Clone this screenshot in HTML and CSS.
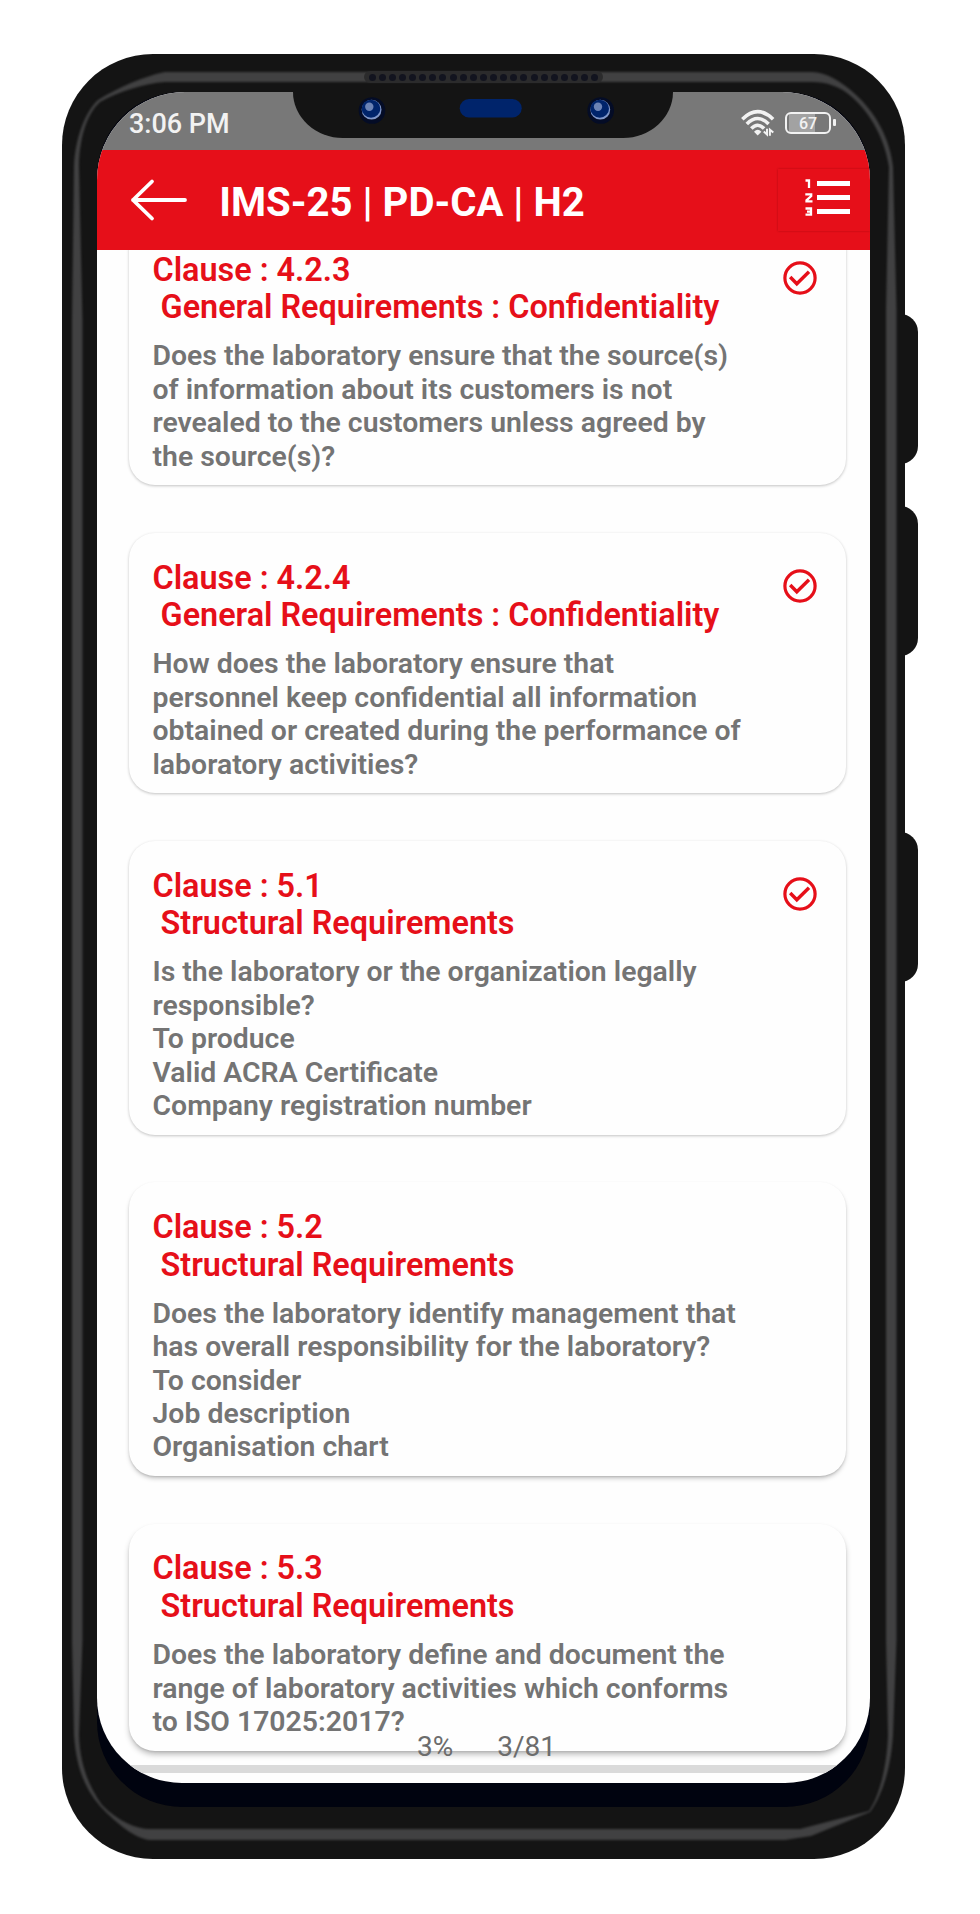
FILE: index.html
```html
<!DOCTYPE html>
<html lang="en">
<head>
<meta charset="utf-8">
<title>IMS-25 | PD-CA | H2</title>
<link rel="stylesheet" href="styles.css">
</head>
<body>
<svg class="defs" width="0" height="0" aria-hidden="true">
  <symbol id="check" viewBox="0 0 34 34">
    <circle cx="17" cy="17" r="15.1" fill="none" stroke="currentColor" stroke-width="3.200"/>
    <path d="M7.2 16 13.8 22.8 26 10.8" fill="none" stroke="currentColor" stroke-width="3.400"/>
  </symbol>
</svg>
<div class="phone">
  <i class="side-key key-up"></i>
  <i class="side-key key-down"></i>
  <i class="side-key key-power"></i>
  <svg class="rim" viewBox="62 54 843 1805" width="843" height="1805" aria-hidden="true">
    <path class="rim-line" fill-rule="evenodd" d="M72 320 74 165C76 132 88 109 98 100 117 88 144 76 165 72H812C826 72 842 82 855 94 875 112 890 138 893 167L896.500 310V1640L893 1735C891 1768 882 1796 870 1812L811 1836 785 1840H150C136 1839 118 1825 100 1806 84 1788 76 1765 74 1735L72 1640ZM82.500 320V1640L79 1735C80 1762 87 1784 102 1805 118 1821 136 1829 150 1829H800L869 1811C880 1795 887 1765 888 1735L886 1640V310L889 167C885 140 872 115 852 97 840 86 826 82 812 82H165C145 83 118 92 100 102 88 113 80 134 79 165Z"/>
  </svg>
  <div class="speaker"><i></i><i></i><i></i><i></i><i></i><i></i><i></i><i></i><i></i><i></i><i></i><i></i><i></i><i></i><i></i><i></i><i></i><i></i><i></i><i></i><i></i><i></i><i></i></div>
  <div class="well">
    <div class="screen">
      <div class="notch">
        <svg width="380" height="46" viewBox="293 92 380 46" aria-hidden="true">
          <g id="lens">
            <circle cx="372" cy="110.500" r="13.300" fill="#040c26"/>
            <circle cx="371.600" cy="109.700" r="9.900" fill="#7f96c8"/>
            <ellipse cx="371" cy="108.700" rx="9.300" ry="9" fill="#00246b"/>
            <circle cx="369.300" cy="106.700" r="4.200" fill="#6c83b5"/>
          </g>
          <use href="#lens" x="228.700"/>
          <rect x="459.700" y="99" width="62" height="18.500" rx="9.200" fill="#00246b"/>
        </svg>
      </div>
      <div class="status">
        <span class="clock">3:06 PM</span>
        <div class="status-icons">
          <svg width="35" height="28" viewBox="741 109 35 28" aria-hidden="true">
            <g fill="none" stroke="#f2f2f2" stroke-width="3.600">
              <path d="M742.300 119.200Q757.700 104.200 773.100 119.200"/>
              <path d="M746.800 123.900Q757.700 113 768.600 123.900"/>
              <path d="M751.300 128.600Q757.700 122 764.100 128.600"/>
            </g>
            <path d="M754 131.700Q757.700 128 761.400 131.700L757.700 135.500Z" fill="#f2f2f2"/>
            <path d="M763.800 131.500 767 134.500V128.700M769.900 135.700V129.700L773.300 132.600" fill="none" stroke="#f2f2f2" stroke-width="2"/>
          </svg>
          <div class="battery"><span>67</span></div>
        </div>
      </div>
      <header class="bar">
        <svg class="back" width="58" height="44" viewBox="130 178 58 44" aria-hidden="true">
          <path d="M185 200H133M152 181.500 133 200 152 218.500" fill="none" stroke="#fff" stroke-width="3.800" stroke-linecap="round" stroke-linejoin="round"/>
        </svg>
        <h1>IMS-25 | PD-CA | H2</h1>
        <div class="list-button">
          <svg width="46" height="40" viewBox="805 178 46 40" aria-hidden="true">
            <path d="M817 181h33v5h-33zM817 195h33v5h-33zM817 209h33v5h-33z" fill="#fff"/>
            <path d="M805.500 180.500H809V188M805.300 194.300H811.200V196L806.500 200.300V201.300H812.500M805.500 208.500H811V214.700H805.500M807 211.600H811" fill="none" stroke="#fff" stroke-width="2.300"/>
          </svg>
        </div>
      </header>
      <main class="list">
        <article class="card">
          <h2>Clause : 4.2.3
 General Requirements : Confidentiality</h2>
          <p>Does the laboratory ensure that the source(s)
of information about its customers is not
revealed to the customers unless agreed by
the source(s)?</p>
          <svg class="check"><use href="#check"/></svg>
        </article>
        <article class="card">
          <h2>Clause : 4.2.4
 General Requirements : Confidentiality</h2>
          <p>How does the laboratory ensure that
personnel keep confidential all information
obtained or created during the performance of
laboratory activities?</p>
          <svg class="check"><use href="#check"/></svg>
        </article>
        <article class="card">
          <h2>Clause : 5.1
 Structural Requirements</h2>
          <p>Is the laboratory or the organization legally
responsible?
To produce
Valid ACRA Certificate
Company registration number</p>
          <svg class="check"><use href="#check"/></svg>
        </article>
        <article class="card lifted">
          <h2>Clause : 5.2
 Structural Requirements</h2>
          <p>Does the laboratory identify management that
has overall responsibility for the laboratory?
To consider
Job description
Organisation chart</p>
        </article>
        <article class="card raised">
          <h2>Clause : 5.3
 Structural Requirements</h2>
          <p>Does the laboratory define and document the
range of laboratory activities which conforms
to ISO 17025:2017?</p>
        </article>
      </main>
      <footer class="progress">
        <div class="counts"><span>3%</span><span>3/81</span></div>
        <div class="track"></div>
      </footer>
    </div>
  </div>
</div>
</body>
</html>
```

FILE: styles.css
```css
* { box-sizing: border-box; }
body {
  margin: 0;
  padding: 54px 0 0 62px;
  height: 1914px;
  background: #fff;
  font-family: Roboto, "Liberation Sans", sans-serif;
}
.defs { position: absolute; }
h1, h2, p { margin: 0; }

.phone {
  position: relative;
  width: 843px;
  height: 1805px;
  padding: 38px 35px 52px 35px;
  border-radius: 91px;
  background: #141414;
}
.side-key {
  position: absolute;
  z-index: -1;
  left: 820px;
  width: 36px;
  height: 150px;
  border-radius: 22px;
  background: #141414;
}
.key-up { top: 260px; }
.key-down { top: 451.500px; }
.key-power { top: 778px; }
.rim { position: absolute; left: 0; top: 0; filter: blur(1px); }
.rim-line { fill: #414142; }
.speaker {
  position: absolute;
  left: 302px;
  top: 17px;
  width: 239px;
  height: 12px;
  padding: 0 4.500px;
  border-radius: 6px;
  background: #2b2b2c;
  display: flex;
  align-items: center;
  justify-content: space-between;
}
.speaker i { width: 7px; height: 7px; border-radius: 50%; background: #12141f; }

.well {
  position: relative;
  height: 1715px;
  background: #00030f;
  border-radius: 85px;
}
.screen {
  position: relative;
  height: 1690.500px;
  border-radius: 88px 88px 85px 85px;
  background: #fefefe;
  overflow: hidden;
  display: flex;
  flex-direction: column;
}
.notch {
  position: absolute;
  left: 196px;
  top: 0;
  width: 380px;
  height: 46px;
  border-radius: 0 0 50px 50px / 0 0 46px 46px;
  background: #141414;
}
.notch svg { display: block; }

.status {
  flex: none;
  height: 58px;
  padding: 0 39px 0 32px;
  background: #787878;
  color: #f2f2f2;
  display: flex;
  justify-content: space-between;
  align-items: center;
}
.clock { font-size: 27px; font-weight: 500; padding-top: 5px; }
.status-icons { display: flex; align-items: center; gap: 9.500px; padding-top: 3px; }
.battery {
  position: relative;
  width: 46px;
  height: 22px;
  border: 2.500px solid #f2f2f2;
  border-radius: 6px;
  background: linear-gradient(90deg, transparent 2px, #a2a2a2 2px 28px, transparent 28px);
  font-size: 16px;
  font-weight: 500;
  line-height: 19px;
  text-align: center;
}
.battery::after {
  content: "";
  position: absolute;
  right: -6.500px;
  top: 5px;
  width: 3px;
  height: 7px;
  border-radius: 1px;
  background: #f2f2f2;
}

.bar {
  flex: none;
  height: 100px;
  padding-left: 33px;
  background: #e60f19;
  color: #fff;
  display: flex;
  align-items: center;
}
.bar h1 { margin-left: 31.300px; font-size: 40.100px; font-weight: 700; line-height: 48px; padding-top: 5px; white-space: nowrap; }
.list-button {
  margin-left: auto;
  width: 92px;
  height: 62px;
  padding: 9px 0 0 27px;
  box-shadow: 0 0 2px rgba(120, 0, 0, .45);
}
.list-button svg { display: block; }

.list {
  flex: 1;
  min-height: 0;
  overflow: hidden;
  padding: 0 24.500px 0 31.500px;
  display: flex;
  flex-direction: column;
  gap: 47.700px;
}
.card {
  flex: none;
  position: relative;
  padding: 26.500px 0 12.300px 24px;
  border-radius: 26px;
  background: #fefefe;
  box-shadow: 0 1px 3px rgba(0, 0, 0, .24);
}
.card:first-child { margin-top: -25px; }
.card.lifted { box-shadow: 0 3px 5px -1px rgba(0, 0, 0, .26), 0 1px 2px rgba(0, 0, 0, .1); }
.card.raised { box-shadow: 0 4px 6px -1px rgba(0, 0, 0, .3), 0 1px 2px rgba(0, 0, 0, .08); }
.card h2 {
  color: #e60f19;
  font-size: 32.400px;
  font-weight: 600;
  line-height: 37.900px;
  white-space: pre;
}
.card p {
  margin-top: 11.900px;
  color: #747474;
  font-size: 28.400px;
  font-weight: 600;
  line-height: 33.460px;
  white-space: pre;
}
.check {
  position: absolute;
  right: 29px;
  top: 36.300px;
  width: 34px;
  height: 34px;
  color: #e60f19;
}

.progress { position: absolute; left: 0; right: 0; bottom: 9.500px; }
.counts {
  display: flex;
  gap: 44px;
  padding-left: 320px;
  color: #6c6c6c;
  font-size: 28px;
  font-weight: 400;
  line-height: 33px;
  margin-bottom: 2px;
}
.track { height: 8px; background: #dadada; }
```
